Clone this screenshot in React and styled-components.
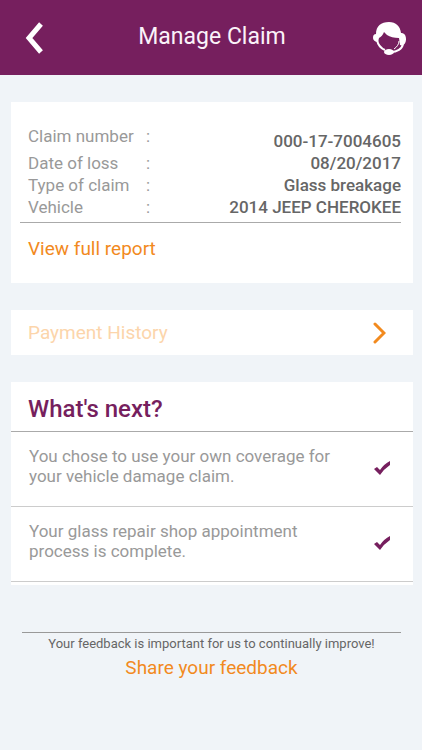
import React from "react";
import styled, { createGlobalStyle } from "styled-components";

const plum = "#761f5e";
const orange = "#f28a1e";

const GlobalStyle = createGlobalStyle`
  *, *::before, *::after { box-sizing: border-box; }
  html, body { margin: 0; background: #f0f4f8; }
  body { font-family: Roboto, "Liberation Sans", sans-serif; }
  button { font-family: inherit; }
`;

const Page = styled.div`
  min-height: 100vh;
  background: #f0f4f8;
`;

const Header = styled.header`
  display: grid;
  grid-template-columns: 48px 1fr 48px;
  align-items: center;
  height: 75px;
  padding: 0 8px 0 10px;
  background: ${plum};
`;

const Title = styled.h1`
  margin: 0;
  padding-bottom: 2px;
  color: #fbf2f9;
  font-size: 23px;
  line-height: 28px;
  font-weight: 400;
  text-align: center;
`;

const IconButton = styled.button`
  display: flex;
  align-items: center;
  justify-content: center;
  height: 48px;
  padding: 0;
  border: 0;
  background: none;
  color: #fff;
  cursor: pointer;
`;

const Content = styled.main`
  display: flex;
  flex-direction: column;
  gap: 27px;
  padding: 27px 9px 0 11px;
`;

const Card = styled.section`
  background: #fff;
`;

const ClaimCard = styled(Card)`
  padding: 23px 12px 22px 9px;
`;

const Details = styled.dl`
  display: grid;
  margin: 0;
  padding: 0 0 4px 8px;
  border-bottom: 1px solid #aaa;
  font-size: 17px;
  line-height: 22px;
`;

const Detail = styled.div`
  display: grid;
  grid-template-columns: 118px 1fr;
  padding-top: ${(p) => (p.$lead ? "5px" : "0")};
`;

const Label = styled.dt`
  display: flex;
  justify-content: space-between;
  margin-top: ${(p) => (p.$lead ? "-5px" : "0")};
  color: #999;
  &::after { content: ":"; width: 0; }
`;

const Value = styled.dd`
  margin: 0;
  color: #666;
  font-weight: 500;
  text-align: right;
`;

const ReportLink = styled.a`
  display: inline-block;
  margin: 14px 8px 0;
  color: ${orange};
  font-size: 19px;
  line-height: 24px;
  text-decoration: none;
`;

const HistoryButton = styled.button`
  display: flex;
  align-items: center;
  justify-content: space-between;
  width: 100%;
  height: 45px;
  padding: 0 27px 0 17px;
  border: 0;
  background: #fff;
  color: #fcd5ab;
  font-size: 19px;
  line-height: 24px;
  cursor: pointer;
`;

const NextCard = styled(Card)`
  padding-bottom: 3px;
`;

const NextTitle = styled.h2`
  margin: 0;
  padding: 14px 17px 8px;
  border-bottom: 1px solid #aaa;
  color: ${plum};
  font-size: 24px;
  line-height: 27px;
  font-weight: 500;
`;

const Steps = styled.ul`
  margin: 0;
  padding: 0;
  list-style: none;
`;

const Step = styled.li`
  display: flex;
  align-items: flex-start;
  justify-content: space-between;
  min-height: 75px;
  padding: 14px 22px 12px 18px;
  border-bottom: 1px solid #ccc;
`;

const StepText = styled.p`
  max-width: 310px;
  margin: 0;
  color: #999;
  font-size: 17px;
  line-height: 20px;
`;

const TickIcon = styled.svg`
  flex: none;
  margin-top: 14px;
`;

const Feedback = styled.footer`
  margin: 47px 21px 0 22px;
  border-top: 1px solid #999;
  text-align: center;
`;

const Note = styled.p`
  margin: 2px 0 0;
  color: #666;
  font-size: 13px;
  line-height: 18px;
`;

const FeedbackLink = styled.a`
  display: inline-block;
  margin-top: 3px;
  color: ${orange};
  font-size: 19px;
  line-height: 24px;
  text-decoration: none;
`;

const BackIcon = () => (
  <svg width="20" height="32" viewBox="0 0 20 32" fill="none" aria-hidden="true">
    <path d="M17 2 L5 16 L17 30" stroke="#fff" strokeWidth="5" />
  </svg>
);

const AgentIcon = () => (
  <svg width="36" height="36" viewBox="0 0 36 36" aria-hidden="true">
    <path
      fill="#fff"
      d="M4 14 C4 6 9 2 17 2 C24 2 28 6 29 13 C32 13 34 15 34 19 C34 23 32 26 28 25 L27 18 C22 18 18 17 15 15 L12 12 C11 15 9 17 7 18 L6 22 C3 22 1 20 1 18 C1 15 2 14 4 14 Z"
    />
    <path d="M5 20 C6 25 8 28 13 30" fill="none" stroke="#fff" strokeWidth="2" />
    <path d="M27 21 C27 24 25 27 22 29" fill="none" stroke="#fff" strokeWidth="1" />
    <path d="M31 24 C30 29 25 32 19 32" fill="none" stroke="#fff" strokeWidth="2" />
    <ellipse cx="17" cy="32" rx="5" ry="3" fill="#fff" />
  </svg>
);

const ChevronIcon = () => (
  <svg width="13" height="24" viewBox="0 0 13 24" fill="none" aria-hidden="true">
    <path d="M2 3 L11 12 L2 21" stroke={orange} strokeWidth="3" strokeLinecap="round" />
  </svg>
);

const details = [
  ["Claim number", "000-17-7004605"],
  ["Date of loss", "08/20/2017"],
  ["Type of claim", "Glass breakage"],
  ["Vehicle", "2014 JEEP CHEROKEE"],
];

const steps = [
  "You chose to use your own coverage for your vehicle damage claim.",
  "Your glass repair shop appointment process is complete.",
];

export default function App() {
  return (
    <Page>
      <GlobalStyle />
      <Header>
        <IconButton aria-label="Back"><BackIcon /></IconButton>
        <Title>Manage Claim</Title>
        <IconButton aria-label="Contact support"><AgentIcon /></IconButton>
      </Header>
      <Content>
        <ClaimCard>
          <Details>
            {details.map(([label, value], i) => (
              <Detail key={label} $lead={i === 0}>
                <Label $lead={i === 0}>{label}</Label>
                <Value>{value}</Value>
              </Detail>
            ))}
          </Details>
          <ReportLink href="#report">View full report</ReportLink>
        </ClaimCard>
        <HistoryButton>
          Payment History
          <ChevronIcon />
        </HistoryButton>
        <NextCard>
          <NextTitle>What's next?</NextTitle>
          <Steps>
            {steps.map((text) => (
              <Step key={text}>
                <StepText>{text}</StepText>
                <TickIcon width="18" height="16" viewBox="0 0 18 16" role="img" aria-label="Done">
                  <path d="M1 9 L4 7 L7 10 Q11 4 17 1 L17 5 Q11 9 7 15 Z" fill={plum} />
                </TickIcon>
              </Step>
            ))}
          </Steps>
        </NextCard>
      </Content>
      <Feedback>
        <Note>Your feedback is important for us to continually improve!</Note>
        <FeedbackLink href="#feedback">Share your feedback</FeedbackLink>
      </Feedback>
    </Page>
  );
}
